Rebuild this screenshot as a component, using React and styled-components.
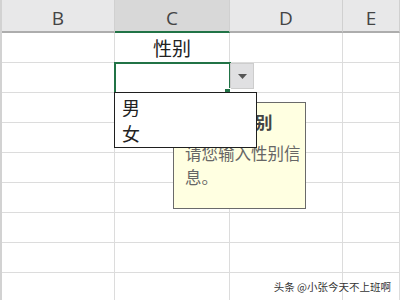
import React from 'react'
import styled, { createGlobalStyle } from 'styled-components'

const GlobalStyle = createGlobalStyle`
  html, body {
    margin: 0;
    padding: 0;
    background: #fff;
  }
  body {
    font-family: "Noto Sans CJK SC", "Noto Sans", sans-serif;
    overflow: hidden;
  }
`

const Sheet = styled.div`
  position: relative;
  width: 400px;
  height: 300px;
  overflow: hidden;
  background: #fff;
  border-left: 2px solid #d2d2d2;
  box-sizing: border-box;
`

const Row = styled.div`
  display: grid;
  grid-template-columns: 113px 115px 113px 1fr;
  height: ${p => (p.$header ? 33 : 30)}px;
`

const HeaderCell = styled.div`
  box-sizing: border-box;
  display: flex;
  align-items: center;
  justify-content: center;
  padding-top: 5px;
  background: ${p => (p.$active ? '#d8d8d8' : '#e8e8e9')};
  border-right: 1px solid #d0d0d0;
  border-bottom: 2px solid ${p => (p.$active ? '#217346' : '#adadad')};
  font-family: "Open Sans", "Liberation Sans", sans-serif;
  font-size: 19px;
  color: #444;
`

const Cell = styled.div`
  position: relative;
  box-sizing: border-box;
  display: flex;
  align-items: center;
  justify-content: center;
  border-right: 1px solid #dcdcdc;
  border-bottom: 1px solid #dcdcdc;
  font-size: 19px;
  color: #222;
  ${p => p.$selected && `
    z-index: 2;
    outline: 2px solid #217346;
    outline-offset: -1px;
    &::after {
      content: '';
      position: absolute;
      right: -2px;
      bottom: -3px;
      width: 5px;
      height: 5px;
      background: #217346;
      border: 1px solid #fff;
    }
  `}
`

const DropButton = styled.div`
  position: absolute;
  left: calc(100% + 1px);
  top: 0;
  width: 24px;
  height: 26px;
  box-sizing: border-box;
  display: flex;
  align-items: center;
  justify-content: center;
  background: #e0e0e2;
  border: 1px solid #cdcdcd;
`

const DropList = styled.div`
  position: absolute;
  left: -1px;
  top: 29px;
  width: 143px;
  height: 56px;
  box-sizing: border-box;
  z-index: 4;
  padding: 1px 0 0 7px;
  background: #fff;
  border: 1.5px solid #1f1f1f;
  display: flex;
  flex-direction: column;
`

const Option = styled.div`
  font-size: 18px;
  line-height: 26px;
  color: #222;
  text-align: left;
`

const InputTip = styled.div`
  position: absolute;
  left: 58px;
  top: 39px;
  width: 133px;
  height: 107px;
  box-sizing: border-box;
  z-index: 3;
  padding: 7px 0 0 11px;
  background: #ffffe1;
  border: 1px solid #6a6a6a;
  text-align: left;
`

const TipTitle = styled.div`
  font-size: 17.5px;
  font-weight: bold;
  line-height: 24px;
  color: #444;
  margin-bottom: 7px;
  white-space: nowrap;
`

const TipBody = styled.div`
  font-size: 16.5px;
  line-height: 24px;
  color: #666;
`

const Watermark = styled.div`
  position: absolute;
  right: 9px;
  bottom: 6px;
  font-size: 10.5px;
  color: #333;
  text-shadow: 0 0 2px #fff, 0 0 1px #fff;
`

const columns = ['B', 'C', 'D', 'E']

export default function App() {
  const rows = Array.from({ length: 9 }, (_, i) => i)

  return (
    <>
      <GlobalStyle />
      <Sheet>
        <Row $header>
          {columns.map(col => (
            <HeaderCell key={col} $active={col === 'C'}>{col}</HeaderCell>
          ))}
        </Row>
        {rows.map(r => (
          <Row key={r}>
            <Cell />
            {r === 1 ? (
              <Cell $selected>
                <DropButton>
                  <svg width="9" height="5" viewBox="0 0 9 5">
                    <polygon points="0,0 9,0 4.5,5" fill="#555" />
                  </svg>
                </DropButton>
                <DropList>
                  <Option>男</Option>
                  <Option>女</Option>
                </DropList>
                <InputTip>
                  <TipTitle>请选择性别</TipTitle>
                  <TipBody>请您输入性别信息。</TipBody>
                </InputTip>
              </Cell>
            ) : (
              <Cell>{r === 0 ? '性别' : ''}</Cell>
            )}
            <Cell />
            <Cell />
          </Row>
        ))}
        <Watermark>头条 @小张今天不上班啊</Watermark>
      </Sheet>
    </>
  )
}
